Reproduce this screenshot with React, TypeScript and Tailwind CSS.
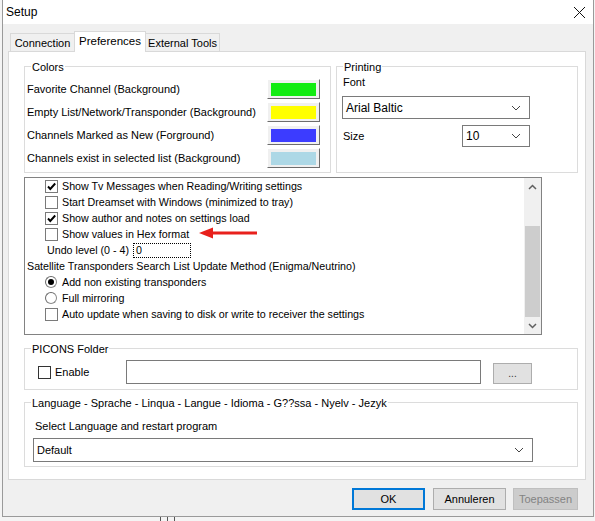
import React from "react";

function Tick() {
  return (
    <svg width="11" height="11" viewBox="0 0 11 11" className="block">
      <polyline points="2,5.5 4.3,8 9.2,2.5" fill="none" stroke="#000" strokeWidth="1.9" />
    </svg>
  );
}

function Check({ checked = false, dark = false }: { checked?: boolean; dark?: boolean }) {
  return (
    <div
      className={
        dark
          ? "w-[13px] h-[13px] border border-[#333333] bg-white flex items-center justify-center shrink-0"
          : "w-[13px] h-[13px] border border-[#7a7a7a] bg-white flex items-center justify-center shrink-0"
      }
    >
      {checked && <Tick />}
    </div>
  );
}

function Radio({ checked = false }: { checked?: boolean }) {
  return (
    <div className="w-[12px] h-[12px] rounded-full border border-[#8a8a8a] border-t-[#6a6a6a] border-l-[#6a6a6a] bg-white flex items-center justify-center shrink-0">
      {checked && <div className="w-[6px] h-[6px] rounded-full bg-black" />}
    </div>
  );
}

function Chevron() {
  return (
    <svg width="10" height="6" viewBox="0 0 10 6" className="block">
      <polyline points="1,1 5,5 9,1" fill="none" stroke="#444" strokeWidth="1" />
    </svg>
  );
}

function Select({ text, w, h, big = false }: { text: string; w: string; h: string; big?: boolean }) {
  return (
    <div className={`${w} ${h} border border-[#7a7a7a] bg-white flex items-center justify-between pl-[3px] pr-[8px]`}>
      <span className={big ? "text-[12px] leading-[14px]" : "text-[11px] leading-[14px]"}>{text}</span>
      <Chevron />
    </div>
  );
}

function Group({
  label,
  className,
  children,
}: {
  label: string;
  className: string;
  children?: React.ReactNode;
}) {
  return (
    <div className={`relative border border-[#dcdcdc] ${className}`}>
      <span className="absolute -top-[7px] left-[6px] px-[1px] bg-white text-[11px] leading-[14px]">{label}</span>
      {children}
    </div>
  );
}

function ColorRow({ label, color }: { label: string; color: string }) {
  return (
    <div className="h-[23px] flex items-center justify-between pl-[2px] pr-[10px]">
      <span className="text-[11px] leading-[14px]">{label}</span>
      <div className="w-[53px] h-[20px] bg-[#f0f0f0] border border-t-white border-l-white border-r-[#6d6d6d] border-b-[#6d6d6d] p-[3px] pb-[2px]">
        <div className="w-full h-full" style={{ backgroundColor: color }} />
      </div>
    </div>
  );
}

function CheckRow({ label, checked = false }: { label: string; checked?: boolean }) {
  return (
    <div className="h-[16px] flex items-center pl-[20px] gap-[4px]">
      <Check checked={checked} />
      <span className="text-[10.7px] leading-[14px]">{label}</span>
    </div>
  );
}

function RadioRow({ label, checked = false }: { label: string; checked?: boolean }) {
  return (
    <div className="h-[16px] flex items-center pl-[20px] gap-[5px]">
      <Radio checked={checked} />
      <span className="text-[10.7px] leading-[14px]">{label}</span>
    </div>
  );
}

export default function App() {
  return (
    <div className="w-[595px] h-[521px] bg-[#f4f4f4] overflow-hidden text-black font-['Liberation_Sans',Arial,sans-serif] relative">
      <div className="ml-[2px] w-[592px] h-[517px] flex flex-col border-l border-r border-b border-[#9a9a9a] bg-[#f0f0f0]">
        {/* title bar */}
        <div className="h-[24px] bg-white flex items-center justify-between pl-[3px] pr-[7px] shrink-0">
          <span className="text-[12px] leading-[14px]">Setup</span>
          <svg width="13" height="13" viewBox="0 0 13 13" className="block">
            <path d="M1 1 L12 12 M12 1 L1 12" stroke="#111" strokeWidth="1" />
          </svg>
        </div>

        <div className="pt-[7px] flex flex-col">
          {/* tabs */}
          <div className="ml-[7px] h-[21px] flex items-end relative z-10">
            <div className="w-[65px] h-[18px] mb-[1px] border border-b-0 border-[#d9d9d9] bg-[#f0f0f0] flex items-center justify-center text-[11px] leading-[14px]">
              Connection
            </div>
            <div className="w-[72px] h-[21px] -ml-px border border-b-0 border-[#d9d9d9] bg-white flex items-start pt-[2px] justify-center text-[11.5px] leading-[14px]">
              Preferences
            </div>
            <div className="w-[75px] h-[18px] mb-[1px] -ml-px border border-b-0 border-[#d9d9d9] bg-[#f0f0f0] flex items-center justify-center text-[11px] leading-[14px]">
              External Tools
            </div>
          </div>

          {/* panel */}
          <div className="-mt-px ml-[5px] w-[578px] h-[429px] border border-[#d9d9d9] bg-white flex flex-col pl-[15px] pt-[14px]">
            <div className="flex gap-[5px] h-[107px]">
              <Group label="Colors" className="w-[307px] h-[107px] pt-[10px]">
                <ColorRow label="Favorite Channel (Background)" color="#12ec12" />
                <ColorRow label="Empty List/Network/Transponder (Background)" color="#ffff00" />
                <ColorRow label="Channels Marked as New (Forground)" color="#3c3cff" />
                <ColorRow label="Channels exist in selected list (Background)" color="#add8e6" />
              </Group>
              <Group label="Printing" className="w-[242px] h-[107px] pt-[8px] pl-[6px]">
                <div className="text-[11px] leading-[14px]">Font</div>
                <div className="mt-[7px] -ml-px">
                  <Select text="Arial Baltic" w="w-[188px]" h="h-[23px]" big />
                </div>
                <div className="mt-[6px] h-[22px] w-[187px] flex items-center justify-between">
                  <span className="text-[11px] leading-[14px]">Size</span>
                  <Select text="10" w="w-[68px]" h="h-[22px]" big />
                </div>
              </Group>
            </div>

            {/* list box */}
            <div className="mt-[4px] w-[518px] h-[158px] border border-[#828282] flex relative">
              <div className="flex-1 flex flex-col">
                <CheckRow label="Show Tv Messages when Reading/Writing settings" checked />
                <CheckRow label="Start Dreamset with Windows (minimized to tray)" />
                <CheckRow label="Show author and notes on settings load" checked />
                <CheckRow label="Show values in Hex format" />
                <div className="h-[16px] flex items-center pl-[22px]">
                  <span className="w-[86px] text-[10.7px] leading-[14px] whitespace-nowrap">Undo level (0 - 4)</span>
                  <div className="w-[58px] h-[15px] border border-dotted border-black flex items-center pl-[2px] text-[10.7px] leading-[13px]">
                    0
                  </div>
                </div>
                <div className="h-[16px] flex items-center pl-[2px] text-[10.7px] leading-[14px]">
                  Satellite Transponders Search List Update Method (Enigma/Neutrino)
                </div>
                <RadioRow label="Add non existing transponders" checked />
                <RadioRow label="Full mirroring" />
                <CheckRow label="Auto update when saving to disk or write to receiver the settings" />
              </div>
              <div className="w-[17px] bg-[#f0f0f0] flex flex-col">
                <div className="h-[17px] flex items-center justify-center">
                  <svg width="9" height="6" viewBox="0 0 9 6" className="block">
                    <polyline points="1,5 4.5,1.5 8,5" fill="none" stroke="#606060" strokeWidth="1.5" />
                  </svg>
                </div>
                <div className="h-[31px]" />
                <div className="h-[91px] mx-[1px] bg-[#cdcdcd]" />
                <div className="h-[17px] flex items-center justify-center">
                  <svg width="9" height="6" viewBox="0 0 9 6" className="block">
                    <polyline points="1,1 4.5,4.5 8,1" fill="none" stroke="#606060" strokeWidth="1.5" />
                  </svg>
                </div>
              </div>
              {/* red arrow annotation */}
              <svg
                width="60"
                height="14"
                viewBox="0 0 60 14"
                className="absolute left-[174px] top-[48px] block"
              >
                <polygon points="0,7 14,1.5 14,12.5" fill="#e8201c" />
                <rect x="12" y="5.5" width="46" height="3" fill="#e8201c" />
              </svg>
            </div>

            {/* PICONS */}
            <Group label="PICONS Folder" className="mt-[13px] w-[554px] h-[42px]">
              <div className="flex items-center pt-[11px] pl-[13px]">
                <div className="w-[88px] flex items-center gap-[4px]">
                  <Check dark />
                  <span className="text-[11px] leading-[14px]">Enable</span>
                </div>
                <div className="w-[355px] h-[24px] border border-[#7a7a7a] bg-white" />
                <div className="ml-[12px] w-[39px] h-[21px] mt-[3px] bg-[#e1e1e1] border border-[#adadad] flex items-center justify-center text-[10px] leading-[12px] text-[#333]">
                  ...
                </div>
              </div>
            </Group>

            {/* Language */}
            <Group
              label="Language - Sprache - Linqua - Langue - Idioma - G??ssa - Nyelv - Jezyk"
              className="mt-[12px] w-[554px] h-[65px] pt-[16px] pl-[8px]"
            >
              <div className="ml-[2px] text-[11px] leading-[14px]">Select Language and restart program</div>
              <div className="mt-[5px]">
                <Select text="Default" w="w-[500px]" h="h-[24px]" />
              </div>
            </Group>
          </div>

          {/* dialog buttons */}
          <div className="mt-[8px] flex justify-end pr-[15px]">
            <div className="w-[73px] h-[22px] bg-[#e1e1e1] border-2 border-[#0078d7] flex items-center justify-center text-[11px] leading-[14px]">
              OK
            </div>
            <div className="ml-[8px] w-[73px] h-[22px] bg-[#e1e1e1] border border-[#adadad] flex items-center justify-center text-[11px] leading-[14px]">
              Annuleren
            </div>
            <div className="ml-[7px] w-[65px] h-[22px] bg-[#cccccc] border border-[#bfbfbf] flex items-center justify-center text-[11px] leading-[14px] text-[#838383]">
              Toepassen
            </div>
          </div>
        </div>
      </div>
      {/* things behind the window */}
      <div className="flex ml-[160px] gap-[6px]">
        <div className="w-px h-[4px] bg-[#555]" />
        <div className="w-px h-[4px] bg-[#555]" />
        <div className="w-px h-[4px] bg-[#555]" />
      </div>
    </div>
  );
}
